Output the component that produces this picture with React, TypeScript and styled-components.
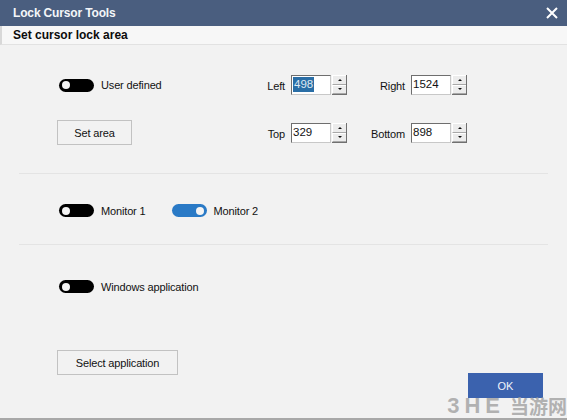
import styled, { createGlobalStyle } from 'styled-components';

const GlobalStyle = createGlobalStyle`
  html, body {
    margin: 0;
    padding: 0;
    background: #f2f2f2;
  }
  * {
    box-sizing: border-box;
  }
`;

const Window = styled.div`
  position: relative;
  width: 567px;
  height: 420px;
  overflow: hidden;
  display: flex;
  flex-direction: column;
  background: #f2f2f2;
  color: #111;
  font-family: "Liberation Sans", Arial, sans-serif;
  font-size: 11px;
  letter-spacing: -0.15px;
  border-bottom: 2px solid #a8a8a8;
`;

const TitleBar = styled.header`
  height: 26px;
  flex: none;
  display: flex;
  align-items: center;
  justify-content: space-between;
  padding: 0 8px 0 13px;
  background: #4a5e7f;
  color: #f4f6f9;
  font-size: 12px;
  font-weight: 700;
`;

const CloseIcon = styled.svg`
  width: 14px;
  height: 14px;
  display: block;
`;

const TabStrip = styled.div`
  height: 19px;
  flex: none;
  padding: 1px 0 0 11px;
  background: #f7f7f7;
  border-bottom: 1px solid #e2e2e2;
  border-left: 2px solid #d8d8d8;
  font-size: 12px;
  font-weight: 700;
  letter-spacing: 0;
  color: #0c0c0c;
  line-height: 16px;
`;

const Section = styled.section<{ $height: number }>`
  height: ${(p) => p.$height}px;
  flex: none;
  margin: 0 19px;
  padding-left: 38px;
  border-bottom: 1px solid #e4e4e4;
`;

const TopGrid = styled.div`
  padding-top: 30px;
  display: grid;
  grid-template-columns: 206px 28px 56px 64px 56px;
  grid-template-rows: 20px 20px;
  row-gap: 28px;
  align-items: center;
`;

const ToggleRow = styled.div`
  display: flex;
  align-items: center;
  gap: 7px;
  padding-left: 2px;
`;

const MonitorRow = styled.div`
  display: flex;
  gap: 24px;
  padding-top: 30px;
`;

const Track = styled.span<{ $on?: boolean }>`
  width: 35px;
  height: 13px;
  flex: none;
  display: flex;
  align-items: center;
  justify-content: ${(p) => (p.$on ? 'flex-end' : 'flex-start')};
  padding: 0 3px;
  border-radius: 7px;
  background: ${(p) => (p.$on ? '#2a7ac6' : '#000')};
`;

const Knob = styled.span`
  width: 8px;
  height: 8px;
  border-radius: 50%;
  background: #f4f4f4;
`;

const Label = styled.span`
  white-space: nowrap;
`;

const PushButton = styled.button<{ $width: number }>`
  width: ${(p) => p.$width}px;
  height: 25px;
  padding: 0;
  background: #f2f2f2;
  border: 1px solid #c2c2c2;
  color: #111;
  font: inherit;
  letter-spacing: inherit;
`;

const AreaButton = styled(PushButton)`
  align-self: center;
  margin-top: -1px;
`;

const FieldLabel = styled.span`
  justify-self: end;
  padding-right: 6px;
  white-space: nowrap;
  position: relative;
  top: 1px;
`;

const Spin = styled.div`
  display: flex;
  gap: 1px;
  height: 20px;
`;

const SpinInput = styled.div`
  width: 41px;
  height: 20px;
  padding: 1px 0 0 1px;
  background: #fff;
  border: 1px solid #6e6e6e;
  border-right-color: #c8c8c8;
  border-bottom-color: #c8c8c8;
  font-size: 11.5px;
  letter-spacing: 0;
  line-height: 15px;
`;

const Selected = styled.span`
  display: inline-block;
  padding: 0 1px;
  background: #2a6ea6;
  color: #dfe9f2;
`;

const SpinButtons = styled.div`
  width: 15px;
  display: flex;
  flex-direction: column;
  border-bottom: 1px solid #707070;
  border-right: 1px solid #707070;
`;

const SpinButton = styled.span<{ $down?: boolean }>`
  flex: 1;
  display: flex;
  align-items: center;
  justify-content: center;
  background: #ececec;
  border-top: 1px solid #fff;
  border-left: 1px solid #fff;
  border-bottom: 1px solid #a8a8a8;
  &::after {
    content: '';
    border-left: 2px solid transparent;
    border-right: 2px solid transparent;
    ${(p) => (p.$down ? 'border-top: 2px solid #111;' : 'border-bottom: 2px solid #111;')}
  }
`;

const AppSection = styled.div`
  padding: 35px 0 0 57px;
`;

const Footer = styled.div`
  flex: 1;
  padding: 57px 24px 0 57px;
  display: flex;
  justify-content: space-between;
  align-items: flex-start;
`;

const OkButton = styled.button`
  width: 75px;
  height: 25px;
  margin-top: 23px;
  padding: 0;
  border: 0;
  background: #3b62ae;
  color: #f0f4fa;
  font: inherit;
  letter-spacing: 0;
`;

const Watermark = styled.div`
  position: absolute;
  right: 0;
  bottom: 1px;
  display: flex;
  align-items: center;
  gap: 5px;
  color: rgba(160, 160, 160, 0.8);
  font-family: "Noto Sans CJK SC", sans-serif;
  font-size: 19px;
  font-weight: 700;
  letter-spacing: 0;
  line-height: 22px;
`;

const WatermarkBrand = styled.span`
  font-family: "Liberation Sans", sans-serif;
  font-size: 22px;
  letter-spacing: 5px;
`;

function SpinBox({ value, selected }: { value: string; selected?: boolean }) {
  return (
    <Spin>
      <SpinInput>{selected ? <Selected>{value}</Selected> : value}</SpinInput>
      <SpinButtons>
        <SpinButton />
        <SpinButton $down />
      </SpinButtons>
    </Spin>
  );
}

function Toggle({ label, on }: { label: string; on?: boolean }) {
  return (
    <ToggleRow>
      <Track $on={on}>
        <Knob />
      </Track>
      <Label>{label}</Label>
    </ToggleRow>
  );
}

export default function App() {
  return (
    <>
      <GlobalStyle />
      <Window>
        <TitleBar>
          Lock Cursor Tools
          <CloseIcon viewBox="0 0 14 14">
            <path d="M2 2 L12 12 M12 2 L2 12" stroke="#fff" strokeWidth="2" />
          </CloseIcon>
        </TitleBar>
        <TabStrip>Set cursor lock area</TabStrip>
        <Section $height={129}>
          <TopGrid>
            <Toggle label="User defined" />
            <FieldLabel>Left</FieldLabel>
            <SpinBox value="498" selected />
            <FieldLabel>Right</FieldLabel>
            <SpinBox value="1524" />
            <AreaButton $width={75}>Set area</AreaButton>
            <FieldLabel>Top</FieldLabel>
            <SpinBox value="329" />
            <FieldLabel>Bottom</FieldLabel>
            <SpinBox value="898" />
          </TopGrid>
        </Section>
        <Section $height={71}>
          <MonitorRow>
            <Toggle label="Monitor 1" />
            <Toggle label="Monitor 2" on />
          </MonitorRow>
        </Section>
        <AppSection>
          <Toggle label="Windows application" />
        </AppSection>
        <Footer>
          <PushButton $width={121}>Select application</PushButton>
          <OkButton>OK</OkButton>
        </Footer>
        <Watermark>
          <WatermarkBrand>3HE</WatermarkBrand>
          当游网
        </Watermark>
      </Window>
    </>
  );
}
